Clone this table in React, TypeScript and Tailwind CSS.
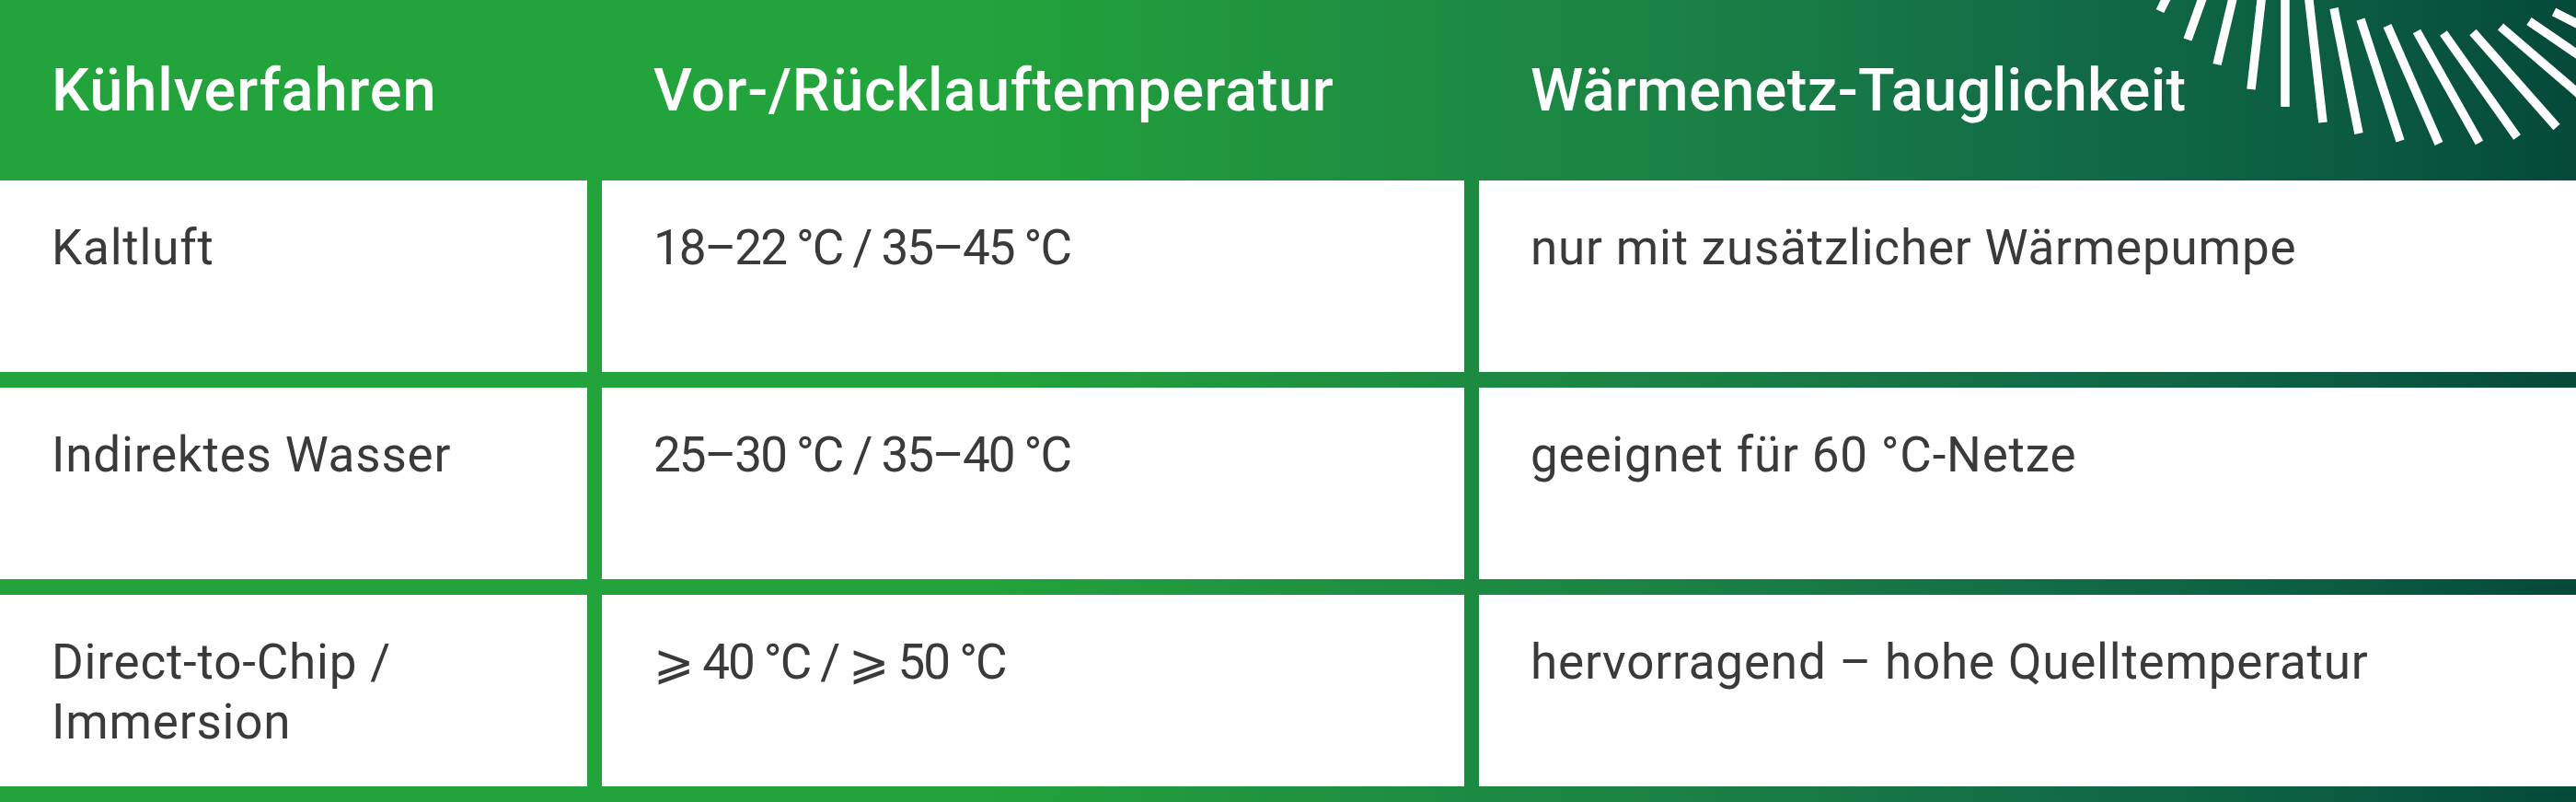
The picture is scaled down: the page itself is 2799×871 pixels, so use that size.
const columns = ['Kühlverfahren', 'Vor-/Rücklauftemperatur', 'Wärmenetz-Tauglichkeit'];

const rows = [
  ['Kaltluft', '18–22 °C / 35–45 °C', 'nur mit zusätzlicher Wärmepumpe'],
  ['Indirektes Wasser', '25–30 °C / 35–40 °C', 'geeignet für 60 °C-Netze'],
  ['Direct-to-Chip / Immersion', '⩾ 40 °C / ⩾ 50 °C', 'hervorragend – hohe Quelltemperatur'],
];

// rays of the sun mark, in page pixels (x1, y1, x2, y2)
const rays: [number, number, number, number][] = [
  [2359, -12, 2347, 12],
  [2396, -10, 2377, 43],
  [2428, -10, 2409, 70],
  [2458, -8, 2446, 97],
  [2483, -8, 2483, 116],
  [2508, -8, 2524, 133],
  [2536, 9, 2563, 145],
  [2565, 21, 2608, 153],
  [2594, 28, 2650, 156],
  [2626, 34, 2694, 155],
  [2655, 36, 2735, 149],
  [2687, 35, 2778, 138],
  [2717, 29, 2830, 126],
  [2748, 23, 2840, 86],
  [2775, 13, 2840, 46],
];

function SunRays() {
  return (
    <svg
      className="pointer-events-none absolute top-0 right-0"
      width={500}
      height={196}
      viewBox="2299 0 500 196"
    >
      {rays.map(([x1, y1, x2, y2], i) => (
        <line key={i} x1={x1} y1={y1} x2={x2} y2={y2} stroke="#fff" strokeWidth={9.5} />
      ))}
    </svg>
  );
}

export default function App() {
  return (
    <div className="relative h-[871px] w-[2799px] overflow-hidden bg-[linear-gradient(to_right,#22a33b_0%,#22a33b_38%,#1f9040_52%,#1a8045_66%,#126b47_80%,#0c5d42_90%,#05493a_100%)] font-['Roboto',sans-serif]">
      <div className="relative grid h-[196px] grid-cols-[638px_937px_1fr] items-center gap-x-4">
        {columns.map((c, i) => (
          <div
            key={c}
            className={
              'pl-14 text-[65px] leading-none font-medium text-white ' +
              (i === 0 ? 'tracking-[0.9px]' : i === 1 ? 'tracking-[0.6px]' : 'tracking-[0.3px]')
            }
          >
            {c}
          </div>
        ))}
        <SunRays />
      </div>
      <div className="grid grid-cols-[638px_937px_1fr] gap-x-4 gap-y-[17px] pb-[17px]">
        {rows.map((r) =>
          r.map((cell, i) => (
            <div
              key={r[0] + i}
              className={
                'h-[208px] bg-white pt-[41px] pl-14 text-[53px] leading-[65px] font-normal text-[#3a3a3a] ' +
                (i === 0 ? 'pr-24 tracking-[0.8px]' : i === 1 ? 'pr-10 tracking-[-2px]' : 'pr-10 tracking-[0.8px]')
              }
            >
              {cell}
            </div>
          )),
        )}
      </div>
    </div>
  );
}
